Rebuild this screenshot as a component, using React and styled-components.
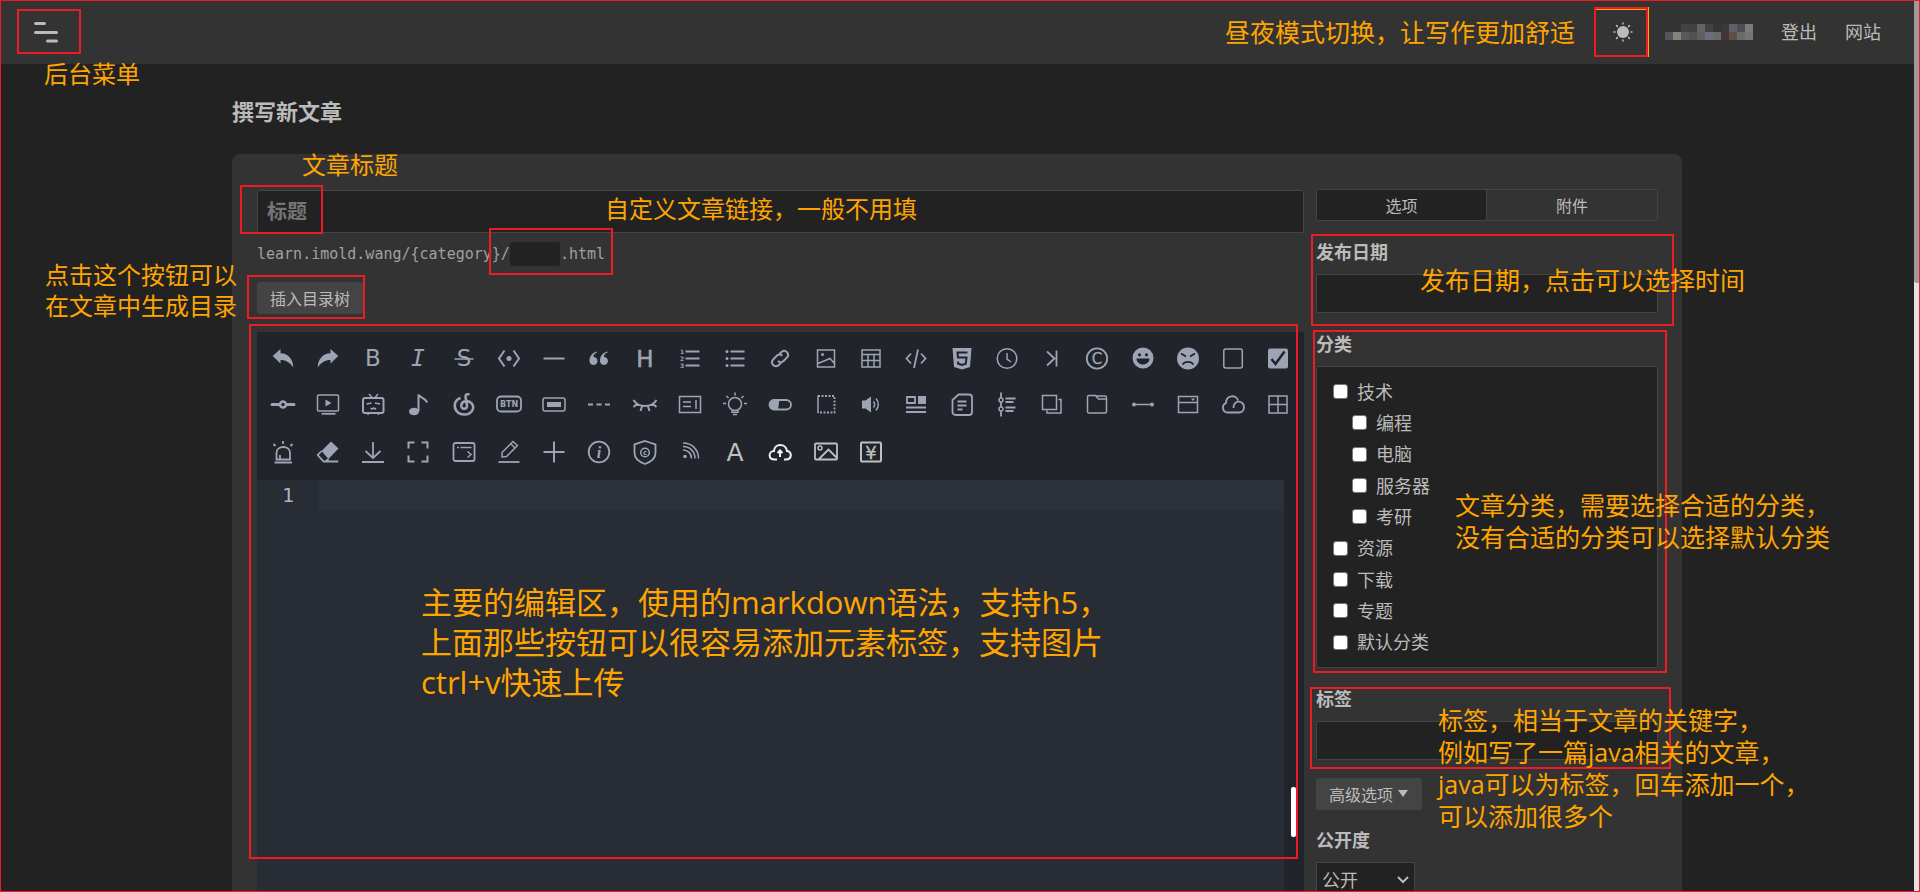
import React, { useState } from "react";
import styled, { createGlobalStyle, css } from "styled-components";

const sans = `"Open Sans", "Noto Sans CJK SC", sans-serif`;
const mono = `"DejaVu Sans Mono", "Noto Sans CJK SC", monospace`;

const GlobalStyle = createGlobalStyle`
  * { box-sizing: border-box; }
  body {
    margin: 0;
    background: #222;
    color: #bbb;
    font-family: ${sans};
    font-size: 16px;
  }
  button, input, select, textarea {
    font-family: inherit;
    color: inherit;
  }
`;

const Page = styled.div`
  position: relative;
  display: grid;
  grid-template-columns: 1fr 6px;
  height: 100vh;
  overflow: hidden;
`;

const Content = styled.div`
  min-width: 0;
`;

const PageScroll = styled.div`
  background: #e2e2e2;

  &::before {
    content: "";
    display: block;
    height: 283px;
    border-radius: 0 0 3px 3px;
    background: #9c9c9c;
  }
`;

/* ---------- header ---------- */

const Header = styled.header`
  display: flex;
  align-items: center;
  justify-content: space-between;
  height: 64px;
  padding: 0 33px;
  background: #333;
`;

const IconButton = styled.button`
  display: grid;
  place-items: center;
  width: 28px;
  height: 28px;
  padding: 0;
  border: 0;
  background: none;
  color: #bbb;
  cursor: pointer;
`;

const Nav = styled.nav`
  display: flex;
  align-items: center;
  gap: 28px;
`;

const NavLink = styled.a`
  color: #bbb;
  font-size: 18px;
  line-height: 28px;
  text-decoration: none;
`;

/* ---------- page body ---------- */

const Container = styled.main`
  max-width: 1450px;
  margin: 0 auto;
  padding-top: 31px;
`;

const PageTitle = styled.h1`
  margin: 0 0 27px;
  font-size: 22px;
  line-height: 32px;
  font-weight: 700;
`;

const Card = styled.form`
  display: grid;
  grid-template-columns: minmax(0, 1fr) 342px;
  gap: 12px;
  padding: 35px 24px 35px 25px;
  border-radius: 8px;
  background: #333;
`;

const MainColumn = styled.div`
  padding-top: 1px;
`;

const field = css`
  display: block;
  width: 100%;
  border: 1px solid #444;
  border-radius: 2px;
  outline: none;
  background: #222;
`;

const TitleInput = styled.input`
  ${field}
  height: 43px;
  padding: 0 9px;
  font-size: 20px;
  font-weight: 700;

  &::placeholder {
    color: #757575;
    opacity: 1;
  }
`;

const Permalink = styled.div`
  display: flex;
  align-items: center;
  height: 24px;
  margin: 9px 0 16px;
  color: #a0a0a0;
  font-family: ${mono};
  font-size: 15px;
`;

const SlugInput = styled.input`
  width: 50px;
  height: 24px;
  border: 0;
  border-radius: 3px;
  background: #222;
`;

const Button = styled.button`
  display: flex;
  align-items: center;
  gap: 4px;
  height: 32px;
  padding: 0 13px;
  border: 0;
  border-radius: 3px;
  background: #444;
  font-size: 16px;
  cursor: pointer;
`;

const Editor = styled.section`
  margin-top: 18px;
  background: #282c34;
`;

const Toolbar = styled.div`
  display: grid;
  grid-template-columns: repeat(23, 1fr);
  grid-template-rows: 46px 46px 50px;
  padding: 3px;
  background: #21252b;
`;

const Tool = styled.button`
  display: grid;
  place-items: center;
  padding: 0;
  border: 0;
  background: none;
  color: ${(props) => props.$tone || "#9ea4b5"};
  cursor: pointer;

  svg {
    overflow: visible;
  }
`;

const EditorBody = styled.div`
  display: grid;
  grid-template-columns: 62px 1fr 20px;
  height: 600px;
`;

const Gutter = styled.div`
  text-align: center;
  color: #abb2bf;
  font-family: ${mono};
  font-size: 20px;
  line-height: 31px;
`;

const Code = styled.textarea`
  display: block;
  width: 100%;
  padding: 0 6px;
  border: 0;
  outline: none;
  resize: none;
  background: linear-gradient(#2d313b, #2d313b) 0 0 / 100% 31px no-repeat;
  color: #abb2bf;
  font-family: ${mono};
  font-size: 20px;
  line-height: 31px;
`;

const EditorScroll = styled.div`
  padding: 307px 8px 0 7px;
  background: #21252b;

  &::before {
    content: "";
    display: block;
    height: 50px;
    border-radius: 2px;
    background: #fff;
  }
`;

/* ---------- options column ---------- */

const Tabs = styled.div`
  display: grid;
  grid-template-columns: 1fr 1fr;
  height: 32px;
  border: 1px solid #444;
  border-radius: 3px;
  overflow: hidden;
`;

const Tab = styled.button`
  padding: 0;
  border: 0;
  border-right: ${(props) => (props.$active ? "1px solid #444" : "0")};
  background: ${(props) => (props.$active ? "#222" : "#333")};
  font-size: 16px;
  cursor: pointer;
`;

const Field = styled.div`
  margin-top: 19px;
`;

const FieldLabel = styled.label`
  display: block;
  margin-bottom: 10px;
  font-size: 18px;
  line-height: 24px;
  font-weight: 700;
`;

const TextInput = styled.input`
  ${field}
  height: 39px;
  padding: 0 8px;
  font-size: 16px;
`;

const CategoryList = styled.ul`
  display: grid;
  grid-auto-rows: 1fr;
  height: 302px;
  margin: 0;
  padding: 9px 16px;
  border: 1px solid #444;
  border-radius: 2px;
  background: #222;
  list-style: none;
`;

const Category = styled.li`
  display: flex;
  align-items: center;
  padding-left: ${(props) => (props.$child ? "19px" : "0")};

  label {
    display: flex;
    align-items: center;
    gap: 9px;
    font-size: 18px;
    line-height: 24px;
  }
`;

const Checkbox = styled.input`
  appearance: none;
  width: 15px;
  height: 15px;
  margin: 0;
  border: 1px solid #767676;
  border-radius: 3px;
  background: #fff;

  &:checked {
    background: #467b96;
  }
`;

const AdvancedRow = styled.div`
  margin: 18px 0;
`;

const SelectWrap = styled.div`
  display: grid;
  width: 99px;
  align-items: center;

  select, svg {
    grid-area: 1 / 1;
  }

  svg {
    justify-self: end;
    margin-right: 6px;
    pointer-events: none;
  }
`;

const Select = styled.select`
  appearance: none;
  width: 100%;
  height: 36px;
  padding: 0 5px;
  border: 1px solid #444;
  background: #222;
  font-size: 18px;
`;

/* ---------- tutorial notes that lie over the page ---------- */

const Notes = styled.div`
  position: absolute;
  inset: 0;
  border: 1px solid #ed1c24;
  pointer-events: none;
`;

const Frame = styled.div`
  position: absolute;
  left: ${(props) => props.$x}px;
  top: ${(props) => props.$y}px;
  width: ${(props) => props.$w}px;
  height: ${(props) => props.$h}px;
  border: 2px solid #ed1c24;
  box-shadow: ${(props) => (props.$glow ? "1px 0 0 #ffa500, inset 0 1px 0 #ffa500" : "none")};
`;

const Note = styled.p`
  position: absolute;
  left: ${(props) => props.$x}px;
  top: ${(props) => props.$y}px;
  margin: 0;
  color: #ffa500;
  font-size: ${(props) => props.$size}px;
  line-height: ${(props) => props.$line}px;
  white-space: pre;
`;

const f = { fill: "currentColor", stroke: "none" };

const Letter = ({ x = 13, y = 21, size = 23, children, ...rest }) => (
  <text x={x} y={y} fontSize={size} textAnchor="middle" fontFamily="DejaVu Sans" {...f} {...rest}>
    {children}
  </text>
);

const HUE = { light: "#bfbfbf", white: "#f2f2f2" };

// every drawing is made on a 26 x 26 board
const tools = [
  ["撤销", <path {...f} d="M2.7 11 10.5 4v4.2C18 8.5 23 13.5 23.3 22.5 20 17.5 16 15 10.5 15v3.5z" />],
  ["重做", <path {...f} d="M23.3 11 15.5 4v4.2C8 8.5 3 13.5 2.7 22.5 6 17.5 10 15 15.5 15v3.5z" />],
  ["粗体", <Letter>B</Letter>],
  ["斜体", <Letter fontFamily="DejaVu Sans Mono" fontStyle="italic">I</Letter>],
  ["删除线", <><Letter>S</Letter><path d="M3.5 14h19" /></>],
  ["行内代码", <><path strokeWidth="2" d="M8.5 5.5 3 13.5l5.5 8M17.5 5.5l5.5 8-5.5 8" /><circle cx="13" cy="13.5" r="2.5" {...f} /></>],
  ["横线", <path strokeWidth="2" d="M2.5 13.5h21" />],
  ["引用", <path {...f} d="M11 6.5C5 8 3.5 12.5 3.5 15.5a4 4 0 1 0 4-3.5c-.3-2 1-3.5 3.5-4.5zM21.5 6.5C15.5 8 14 12.5 14 15.5a4 4 0 1 0 4-3.5c-.3-2 1-3.5 3.5-4.5z" />],
  ["标题", <Letter y="22" stroke="currentColor" strokeWidth="0.5">H</Letter>],
  ["有序列表", <><path strokeWidth="2" d="M8.5 6.5h14M8.5 13.5h14M8.5 20.5h14" /><Letter x="5" y="9" size="6" fontWeight="700">1</Letter><Letter x="5" y="16" size="6" fontWeight="700">2</Letter><Letter x="5" y="23" size="6" fontWeight="700">3</Letter></>],
  ["无序列表", <><path strokeWidth="2" d="M8.5 6.5h14M8.5 13.5h14M8.5 20.5h14" /><circle cx="5" cy="6.5" r="1.5" {...f} /><circle cx="5" cy="13.5" r="1.5" {...f} /><circle cx="5" cy="20.5" r="1.5" {...f} /></>],
  ["链接", <path strokeWidth="2" d="m12 9.5 3-3a4 4 0 0 1 5.5 5.5l-4 4a4 4 0 0 1-5.5 0M14.5 17l-3 3.3A4 4 0 0 1 5.8 14.8l4-4a4 4 0 0 1 5.5 0" />],
  ["图片", <><path d="M4.5 5h17v17h-17zM5 18.5l12-5 4.5 5" /><circle cx="9.5" cy="9.5" r="1.5" {...f} /></>],
  ["表格", <path d="M4 5h18v17H4zM4 9.5h18M4 15.5h18M10 9.5v12.5M16 9.5v12.5" />],
  ["代码块", <path strokeWidth="1.8" d="M8 8.5 3.5 13.5l4.5 5M18 8.5l4.5 5-4.5 5M15 4.5 11 23" />],
  ["HTML", <><path {...f} d="M3.5 3h19L21 22l-8 2.5L5 22z" /><path stroke="#21252b" strokeWidth="2" d="M18.5 7.5h-10l.5 5h8.5l-.7 6.2-3.8 1.3-3.8-1.3-.2-2.2" /></>],
  ["时间", <><circle cx="13" cy="13.5" r="9.8" /><path d="M13 8v6l4 3" /></>],
  ["跳转", <path strokeWidth="1.8" d="M8 6.5l7.5 7-7.5 7M17.5 5.5v16" />],
  ["版权", <><circle cx="13" cy="13.5" r="10.2" strokeWidth="1.8" /><Letter y="19" size="15" stroke="currentColor" strokeWidth="0.3">C</Letter></>],
  ["表情", <><circle cx="13" cy="13" r="10.5" {...f} /><g fill="#21252b" stroke="none"><circle cx="9.5" cy="9.8" r="1.6" /><circle cx="16.5" cy="9.8" r="1.6" /><path d="M6.5 13.5h13c0 3.5-3 6-6.5 6s-6.5-2.5-6.5-6z" /></g></>],
  ["生气", <><circle cx="13" cy="13.5" r="11" {...f} /><g stroke="#21252b"><path strokeWidth="2" d="m6 8.5 5 3M20 8.5l-5 3" /><path strokeWidth="1.8" d="M7.5 19.5c2.5-3.5 8.5-3.5 11 0" /></g></>],
  ["方框", <rect x="3.8" y="4" width="18.5" height="19" rx="2" />],
  ["已选", <><rect x="3" y="3.5" width="20" height="20" rx="2" {...f} /><path stroke="#21252b" strokeWidth="2.5" d="m6.5 14 4 5 9-12.5" /></>],

  ["时间轴", <><path strokeWidth="3" strokeLinecap="round" d="M2 13.5h7M17 13.5h7" /><circle cx="13" cy="13.5" r="3" strokeWidth="2.5" /></>],
  ["视频", <><rect x="2.5" y="4" width="21" height="16" rx="1" /><path {...f} d="M10.5 8.5 16.5 12l-6 3.5z" /><path strokeWidth="1.8" d="M6.5 22.8h14" /></>],
  ["哔哩", <><rect x="3" y="7" width="20.5" height="15" rx="2" strokeWidth="2" /><path d="m9 3 3 3.5M18 3l-3 3.5M6.5 13l5-1M20 13l-5-1M10.5 17l1.5 1 1.5-1 1.5 1 1-1M8 23v1M18.5 23v1" /></>],
  ["音乐", <><ellipse cx="9" cy="20.5" rx="5" ry="3.8" {...f} /><path strokeWidth="2" d="M13.5 20V3.5c1 3.5 7.5 3.5 8.5 8" /></>],
  ["歌单", <path strokeWidth="2.5" d="M18.5 3.8c-2-1.3-4.3-.3-4 2l1.5 8.5c.3 2-.7 3.5-2.7 3.5s-3.3-1.5-3-3.8c.5-4 7-5.5 10.5-1.5 3.5 5-.3 11-7.5 11s-10.5-5.5-9.3-11C4.8 9.5 7 7.8 9.5 7" />],
  ["按钮", <><rect x="1" y="5.5" width="24" height="15" rx="4" strokeWidth="1.8" /><Letter y="16" size="8" fontWeight="700">BTN</Letter></>],
  ["输入框", <><rect x="2" y="7" width="22" height="13" rx="2" /><rect x="6" y="11" width="14" height="5" {...f} /></>],
  ["虚线", <path strokeWidth="2" d="M2 13.5h5M10.5 13.5h5M19 13.5h5" />],
  ["隐藏", <path strokeWidth="2" d="M1.5 9c5 8 18 8 23 0M5 13l-3.5 3M10 15.5 8.5 20M16 15.5l1.5 4.5M21 13l3.5 3" />],
  ["卡片", <><path d="M2.5 5.5h21v16h-21z" /><path d="M6 11h8M6 15.5h8M19 9v9" /></>],
  ["灯泡", <><circle cx="13" cy="13" r="6.5" /><path d="M10 19.5v1.8h6v-1.8M11 23.5h4M13 1.5v3M4.5 5l2 2M21.5 5l-2 2M1 12.5h3M22 12.5h3" /></>],
  ["开关", <><rect x="2.5" y="9" width="21.5" height="9.5" rx="4.7" strokeWidth="1.8" /><path {...f} d="M12.5 8.5H7a5 5 0 0 0 0 10h4z" /></>],
  ["选区", <><path strokeDasharray="2 1.5" strokeWidth="1.8" d="M5 5h16.5v16.5H5" /><path d="M5 4.5v17.5" /></>],
  ["音频", <><path {...f} d="M4 9.5h3.5L13 5.5v16l-5.5-4H4z" /><path d="M15.5 10.5c1.5 2 1.5 4 0 6M18 7.5c3 3.5 3 8.5 0 12" /></>],
  ["排版", <><path strokeWidth="1.8" d="M4 6h8v6H4zM3 16.5h20M3 21h20" /><path {...f} d="M15 5h8v8h-8z" /></>],
  ["文档", <path strokeWidth="1.8" d="M9.5 3.5H20a3 3 0 0 1 3 3V21a3 3 0 0 1-3 3H6.5a3 3 0 0 1-3-3V9zM8.5 10.5h9M8.5 14.5h9M8.5 18.5h5" />],
  ["步骤", <><path strokeWidth="1.8" d="M7 1.5V7M7 11v5M7 20v5.5M11.5 7.5h10M11.5 11h8M11.5 16.5h10M11.5 20h8" /><circle cx="7" cy="9" r="2" /><circle cx="7" cy="18" r="2" /></>],
  ["复制", <path d="M3.5 4.5h14v14h-14zM19.5 8.5H22v13.5H8v-2.5" />],
  ["文件夹", <path d="M3.5 6A1.5 1.5 0 0 1 5 4.5h6.500l3 3.5h8v12.5a1.5 1.5 0 0 1-1.5 1.5H5a1.5 1.5 0 0 1-1.5-1.5zM11.5 5H21a1.5 1.5 0 0 1 1.5 1.5V9" />],
  ["间距", <><path d="M4 13.5h18" /><circle cx="4" cy="13.5" r="2" {...f} /><circle cx="22" cy="13.5" r="2" {...f} /></>],
  ["窗口", <><path d="M3.5 5.5h19v16h-19zM3.5 11.5h19" /><path {...f} d="M16 7.5h4l-2 2.5z" /></>],
  ["云盘", <path strokeWidth="1.8" d="M7 21.5a5 5 0 0 1-1-9.5C6 3.5 17 3.5 18 9.5M13.5 17c-.5-8.5 10.5-8 10.5-1 0 3.5-2.5 5.5-5 5.5H7" />],
  ["四格", <path d="M4 5h18v17H4zM13 5v17M4 13.5h18" />],

  ["警报", <path strokeWidth="1.8" d="M6.5 20.5V14c0-8 13.5-8 13.5 0v6.5zM4.5 23.5h17.5M10 20v-4M13 2v3M3.5 5l2 2M22.5 5l-2 2" />],
  ["清除", <><path {...f} d="M16 2.5 23.5 9.5 13.5 20 6.5 12z" /><path strokeWidth="1.8" d="M6.5 12 2.7 16l6 6.5h14.5M13.5 20l-3 2.5" /></>],
  ["下载", <path strokeWidth="1.8" d="M13 3v15M5.5 12l7.5 7 7.5-7M2 23h22" />],
  ["全屏", <path strokeWidth="2" d="M3.5 9.5v-6h6M16.5 3.5h6v6M22.5 16.5v6h-6M9.5 22.5h-6v-6" />],
  ["终端", <><rect x="2.5" y="4" width="21" height="18" rx="2" strokeWidth="1.8" /><path d="M6 8.5h2M9.5 8.5h11M16.5 12.5l3.5 3-3.5 3" /></>],
  ["编辑", <><path d="M6 18v-4.5L17 2.5l4.5 4L10.5 17.5 6 18zM15 5l4 4" /><path d="M2.5 23h21" strokeWidth="1.8" /></>],
  ["新增", <path strokeWidth="2" d="M13 2.5v21M2.5 13h21" />],
  ["信息", <><circle cx="13" cy="13" r="10.3" strokeWidth="1.8" /><Letter y="18.5" size="16" fontStyle="italic" fontFamily="Liberation Serif" fontWeight="700">i</Letter></>],
  ["保护", <><path strokeWidth="1.8" d="M13 2 23.5 5.5v8.5c0 5.5-5 9-10.5 11C7.5 23 2.5 19.5 2.5 14V5.5z" /><circle cx="13" cy="13.5" r="4.3" /><Letter y="16" size="7" fontWeight="700">c</Letter></>],
  ["订阅", <><circle cx="8" cy="17.5" r="1.8" {...f} /><path d="M6 11c5 0 8.5 3.5 8.5 8.5M6 7.5c7 0 12 5 12 12M6 4c9 0 15.5 6.5 15.5 15.5" /></>],
  ["字体", <Letter y="22" size="25">A</Letter>, HUE.light],
  ["上传", <path strokeWidth="2" d="M10 20.5H8C.5 20.5 1.5 12 7 12c.5-8 12-8 13 0 5.5.5 5 8.5-1 8.5h-2M13 18v-6M10.5 14l2.5-2.5 2.5 2.5" />, HUE.white],
  ["相册", <><rect x="2" y="4.5" width="22" height="16" rx="1" strokeWidth="1.8" /><circle cx="7" cy="9" r="2" /><path strokeWidth="1.8" d="m6 20 9.5-9.5 8 8" /></>, HUE.light],
  ["付费", <><rect x="3" y="3.5" width="20" height="19" rx="1" strokeWidth="2" /><Letter y="19.5" size="18" stroke="currentColor" strokeWidth="0.3">¥</Letter></>, HUE.light],
];

const categories = [
  { name: "技术" },
  { name: "编程", child: true },
  { name: "电脑", child: true },
  { name: "服务器", child: true },
  { name: "考研", child: true },
  { name: "资源" },
  { name: "下载" },
  { name: "专题" },
  { name: "默认分类" },
];

const frames = [
  { x: 16, y: 8, w: 64, h: 45 },
  { x: 1593, y: 6, w: 54, h: 50, glow: true },
  { x: 239, y: 184, w: 83, h: 49 },
  { x: 488, y: 227, w: 124, h: 47 },
  { x: 246, y: 274, w: 118, h: 44 },
  { x: 248, y: 323, w: 1049, h: 535 },
  { x: 1310, y: 233, w: 363, h: 92 },
  { x: 1312, y: 329, w: 354, h: 343 },
  { x: 1309, y: 686, w: 361, h: 82 },
];

const notes = [
  { x: 43, y: 57, size: 24, line: 31, text: "后台菜单" },
  { x: 1224, y: 15, size: 25, line: 32, text: "昼夜模式切换，让写作更加舒适" },
  { x: 301, y: 148, size: 24, line: 31, text: "文章标题" },
  { x: 604, y: 192, size: 24, line: 31, text: "自定义文章链接，一般不用填" },
  { x: 44, y: 258, size: 24, line: 31, text: "点击这个按钮可以\n在文章中生成目录" },
  { x: 1419, y: 263, size: 25, line: 32, text: "发布日期，点击可以选择时间" },
  { x: 1454, y: 488, size: 25, line: 32, text: "文章分类，需要选择合适的分类，\n没有合适的分类可以选择默认分类" },
  { x: 420, y: 581, size: 31, line: 40, text: "主要的编辑区，使用的markdown语法，支持h5，\n上面那些按钮可以很容易添加元素标签，支持图片\nctrl+v快速上传" },
  { x: 1437, y: 703, size: 25, line: 32, text: "标签，相当于文章的关键字，\n例如写了一篇java相关的文章，\njava可以为标签，回车添加一个，\n可以添加很多个" },
];

// pixelated user name, two rows of 8px tiles
const tiles = [
  [null, null, "#434249", "#45403f", "#646362", "#404246", "#353535", "#3c3837", "#5d6066", "#4d4e50", "#7d7b75"],
  ["#54575a", "#86827c", "#5c5660", "#525252", "#5e5e5e", "#6a707b", "#6a6a6a", "#413736", "#5d504b", "#6b6b6b", "#77756f"],
];

const UserName = () => (
  <svg width="88" height="18" role="img" aria-label="用户名">
    {tiles.map((row, r) =>
      row.map((color, c) => color && <rect key={`${r}-${c}`} x={c * 8} y={1 + r * 8} width="8" height="8" fill={color} />)
    )}
  </svg>
);

const SunIcon = () => (
  <svg width="20" height="20" viewBox="0 0 20 20" stroke="currentColor" strokeWidth="1.5" strokeLinecap="round">
    <circle cx="10" cy="10" r="6" fill="currentColor" stroke="none" />
    <path d="M10 1v1M10 18v1M1 10h1M18 10h1M3.6 3.6l.8.8M15.6 15.6l.8.8M3.6 16.4l.8-.8M15.6 4.4l.8-.8" />
  </svg>
);

const MenuIcon = () => (
  <svg width="28" height="28" viewBox="0 0 28 28" stroke="currentColor" strokeWidth="3" strokeLinecap="round">
    <path d="M2.5 5.5h9M2.5 14.5h21M14.5 23h9" />
  </svg>
);

const Write = () => {
  const [tab, setTab] = useState("options");

  return (
    <Page>
      <GlobalStyle />
      <Content>
        <Header>
          <IconButton type="button" aria-label="后台菜单">
            <MenuIcon />
          </IconButton>
          <Nav>
            <IconButton type="button" aria-label="昼夜模式切换">
              <SunIcon />
            </IconButton>
            <UserName />
            <NavLink href="#logout">登出</NavLink>
            <NavLink href="#site">网站</NavLink>
          </Nav>
        </Header>

        <Container>
          <PageTitle>撰写新文章</PageTitle>
          <Card onSubmit={(e) => e.preventDefault()}>
            <MainColumn>
              <TitleInput aria-label="标题" placeholder="标题" />
              <Permalink>
                learn.imold.wang/{"{category}"}/
                <SlugInput aria-label="链接" />
                .html
              </Permalink>
              <Button type="button">插入目录树</Button>

              <Editor>
                <Toolbar>
                  {tools.map(([name, drawing, tone]) => (
                    <Tool key={name} type="button" aria-label={name} $tone={tone}>
                      <svg width="26" height="26" viewBox="0 0 26 26" fill="none" stroke="currentColor" strokeWidth="1.5">
                        {drawing}
                      </svg>
                    </Tool>
                  ))}
                </Toolbar>
                <EditorBody>
                  <Gutter>1</Gutter>
                  <Code aria-label="正文" />
                  <EditorScroll />
                </EditorBody>
              </Editor>
            </MainColumn>

            <div>
              <Tabs>
                <Tab type="button" $active={tab === "options"} onClick={() => setTab("options")}>选项</Tab>
                <Tab type="button" $active={tab === "files"} onClick={() => setTab("files")}>附件</Tab>
              </Tabs>

              <Field>
                <FieldLabel htmlFor="date">发布日期</FieldLabel>
                <TextInput id="date" />
              </Field>

              <Field>
                <FieldLabel as="div">分类</FieldLabel>
                <CategoryList>
                  {categories.map((item) => (
                    <Category key={item.name} $child={item.child}>
                      <label>
                        <Checkbox type="checkbox" />
                        {item.name}
                      </label>
                    </Category>
                  ))}
                </CategoryList>
              </Field>

              <Field>
                <FieldLabel htmlFor="tags">标签</FieldLabel>
                <TextInput id="tags" />
              </Field>

              <AdvancedRow>
                <Button type="button">
                  高级选项
                  <svg width="12" height="10" viewBox="0 0 12 10">
                    <path d="M1 1h10L6 8z" fill="currentColor" />
                  </svg>
                </Button>
              </AdvancedRow>

              <FieldLabel htmlFor="visibility">公开度</FieldLabel>
              <SelectWrap>
                <Select id="visibility">
                  <option>公开</option>
                </Select>
                <svg width="12" height="8" viewBox="0 0 12 8" fill="none" stroke="currentColor" strokeWidth="2">
                  <path d="m1 1 5 5 5-5" />
                </svg>
              </SelectWrap>
            </div>
          </Card>
        </Container>
      </Content>
      <PageScroll />

      <Notes>
        {frames.map((b, i) => (
          <Frame key={i} $x={b.x} $y={b.y} $w={b.w} $h={b.h} $glow={b.glow} />
        ))}
        {notes.map((n) => (
          <Note key={n.text} $x={n.x} $y={n.y} $size={n.size} $line={n.line}>
            {n.text}
          </Note>
        ))}
      </Notes>
    </Page>
  );
};

export default Write;
